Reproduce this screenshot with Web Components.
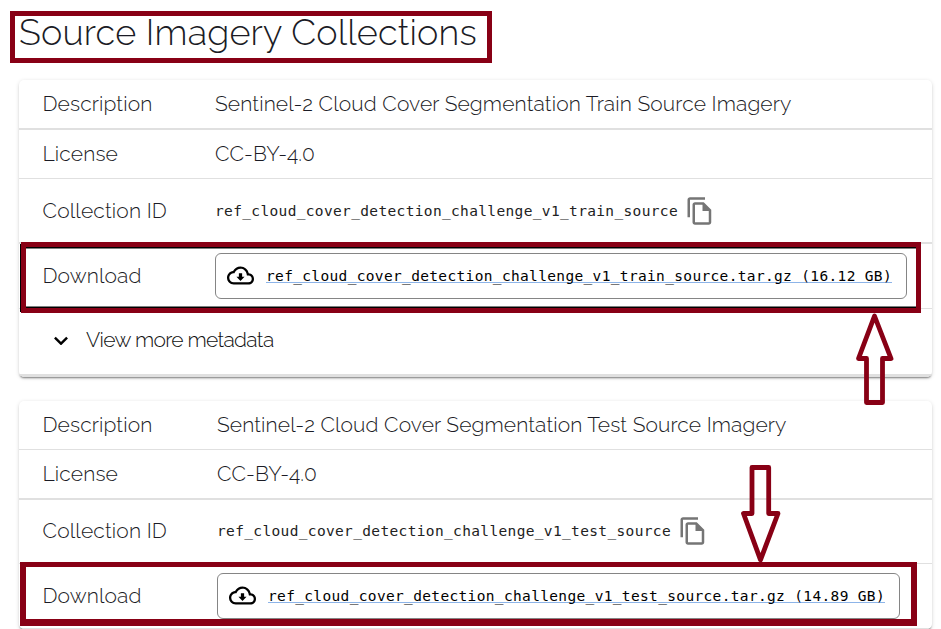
<!DOCTYPE html>
<html lang="en">
<head>
<meta charset="utf-8">
<title>Source Imagery Collections</title>
<style>
html,body{margin:0;padding:0;background:#fff}
body{width:941px;height:629px;overflow:hidden;position:relative;font-family:Raleway,Lato,sans-serif;font-weight:300;color:#1b1b25}
</style>
</head>
<body>
<imagery-page></imagery-page>
<script>
const define=(name,html,extra)=>customElements.define(name,class extends HTMLElement{
  connectedCallback(){
    if(!this.shadowRoot){
      const t=document.createElement('template');
      t.innerHTML=typeof html==='function'?html(this):html;
      this.attachShadow({mode:'open'}).append(t.content.cloneNode(true));
    }
    if(extra)extra(this);
  }
});

// Text tracked out to an exact line width
define('fit-text','<style>:host{display:inline-block;white-space:pre;justify-self:start}</style><slot></slot>',el=>{
  const n=el.textContent.length,w=+el.getAttribute('w');
  el.style.letterSpacing='0px';
  el.style.width='max-content';
  el.style.letterSpacing=((w-el.getBoundingClientRect().width)/n)+'px';
});

define('ui-icon',el=>({
  cloud:`<style>:host{display:block;flex:none;width:27px;height:27px;margin-bottom:1px}svg{display:block}</style><svg width="27" height="27" viewBox="0 0 24 24"><path d="M19.35 10.04C18.67 6.59 15.64 4 12 4 9.11 4 6.6 5.64 5.35 8.04 2.34 8.36 0 10.91 0 14c0 3.31 2.69 6 6 6h13c2.76 0 5-2.24 5-5 0-2.64-2.05-4.78-4.65-4.96zM19 18H6c-2.21 0-4-1.79-4-4 0-2.05 1.53-3.76 3.56-3.97l1.07-.11.5-.95C8.08 7.14 9.94 6 12 6c2.62 0 4.88 1.86 5.39 4.43l.3 1.5 1.53.11c1.56.1 2.78 1.41 2.78 2.96 0 1.65-1.35 3-3 3zm-5.55-8h-2.9v3H8.4l3.6 3.8 3.6-3.8h-2.15z"/></svg>`,
  copy:`<style>:host{display:block;flex:none;width:30px;height:30px}svg{display:block}</style><svg width="30" height="30" viewBox="0 0 24 24" fill="#757575"><path d="M16 1H4c-1.1 0-2 .9-2 2v14h2V3h12V1zm-1 4H8c-1.1 0-1.99.9-1.99 2L6 21c0 1.1.89 2 1.99 2H19c1.1 0 2-.9 2-2V11l-6-6zM8 21V7h6v5h5v9H8z"/></svg>`,
  chevron:`<style>:host{display:block;flex:none;width:14px;height:10px}svg{display:block}</style><svg width="14" height="10" viewBox="0 0 14 10" fill="none" stroke="#000" stroke-width="2.4"><path d="M.9 2.6 7 8.7 13.1 2.6"/></svg>`
}[el.getAttribute('name')]));

define('collection-card',`<style>
:host{display:block;width:913px;border-radius:5px;background:#fff;box-shadow:0 1px 4px rgba(0,0,0,.14),0 2px 2px -1px rgba(0,0,0,.45);overflow:hidden}
</style><slot></slot>`);

define('meta-row',el=>`<style>
:host{display:grid;grid-template-columns:var(--col,172.5px) 1fr;align-items:center;box-sizing:border-box;height:${el.getAttribute('h')}px;border-bottom:${el.getAttribute('line')}px solid #e0e0e0;padding-left:23.5px;font-size:21px;line-height:26px}
:host([h="64"]){padding-bottom:1px}
.v{display:flex;align-items:center;gap:7px}
</style><slot name="label"></slot><div class="v"><slot></slot></div>`);

define('code-id',`<style>:host{display:block;font:400 14.5px/20px Consolas,"DejaVu Sans Mono",monospace;color:#222}</style><slot></slot>`);

define('download-link',el=>`<style>
:host{display:flex;align-items:center;box-sizing:border-box;width:${el.getAttribute('w')}px;height:46px;border:1px solid #858585;border-radius:6px;padding-left:11px;gap:12px}
a{color:#000;font:400 14.5px/20px Consolas,"DejaVu Sans Mono",monospace;height:20px;display:block;background:linear-gradient(#8db4e8,#8db4e8) 0 16px/100% 1px no-repeat}
</style><ui-icon name="cloud"></ui-icon><a><slot></slot></a>`);

define('more-toggle',`<style>
:host{display:flex;align-items:center;box-sizing:border-box;height:68px;border-bottom:3px solid #e0e0e0;padding:0 0 3px 35px;gap:18px;font-size:21px;line-height:26px;color:#111}
</style><ui-icon name="chevron"></ui-icon><slot></slot>`);

// Dark red rectangles and block arrows lying over the page
define('page-marks',`<style>
:host{position:absolute;inset:0;pointer-events:none}svg{display:block}
</style><svg width="941" height="629" fill="none" stroke="#880015">
<path d="M21 244V312M26 247.5H916M26 307.5H916" stroke="#000" stroke-width="2"/>
<rect x="12.5" y="13.5" width="477" height="47" stroke-width="5"/>
<rect x="23.5" y="244.5" width="895" height="66" stroke-width="5"/>
<path fill="#880015" stroke="none" fill-rule="evenodd" d="M20 562H917V626H20ZM26 567V619H911V567Z"/>
<g stroke-width="4.8" stroke-linejoin="round">
<path d="M874.5 316 891 358.5H882.5V402.5H866.5V358.5H858.5Z"/>
<path d="M752 467.5H768.7V513.5H778L760.5 559.8 743.5 513.5H752Z"/></g>
</svg>`);

const row=(h,line,label,w,value)=>`<meta-row h="${h}" line="${line}"><fit-text slot="label" w="${w}">${label}</fit-text>${value}</meta-row>`;
define('imagery-page',`<style>
:host{display:flex;flex-direction:column;box-sizing:border-box;padding:9px 0 0 19px;gap:24px}
h1{margin:0;font-size:36px;line-height:47px;height:47px;font-weight:300}
.second{--col:174.5px}
</style>
<h1><fit-text w="458">Source Imagery Collections</fit-text></h1>
<collection-card>
${row(50,2,'Description',110,'<fit-text w="576.5">Sentinel-2 Cloud Cover Segmentation Train Source Imagery</fit-text>')}
${row(49,1,'License',75.5,'<fit-text w="100">CC-BY-4.0</fit-text>')}
${row(65,2,'Collection ID',124.5,'<code-id><fit-text w="463">ref_cloud_cover_detection_challenge_v1_train_source</fit-text></code-id><ui-icon name="copy"></ui-icon>')}
${row(65,1,'Download',99,'<download-link w="692"><fit-text w="626">ref_cloud_cover_detection_challenge_v1_train_source.tar.gz (16.12 GB)</fit-text></download-link>')}
<more-toggle><fit-text w="187.5">View more metadata</fit-text></more-toggle>
</collection-card>
<collection-card class="second">
${row(49,1,'Description',110,'<fit-text w="569.5">Sentinel-2 Cloud Cover Segmentation Test Source Imagery</fit-text>')}
${row(50,2,'License',75.5,'<fit-text w="100">CC-BY-4.0</fit-text>')}
${row(64,1,'Collection ID',124.5,'<code-id><fit-text w="454">ref_cloud_cover_detection_challenge_v1_test_source</fit-text></code-id><ui-icon name="copy"></ui-icon>')}
${row(65,1,'Download',99,'<download-link w="683"><fit-text w="617">ref_cloud_cover_detection_challenge_v1_test_source.tar.gz (14.89 GB)</fit-text></download-link>')}
</collection-card>
<page-marks></page-marks>`);
</script>
</body>
</html>
